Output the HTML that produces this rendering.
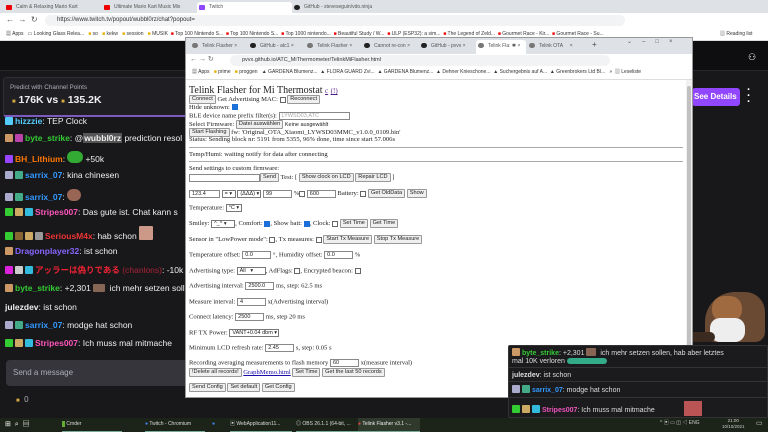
<!DOCTYPE html>
<html><head><meta charset="utf-8"><style>
*{margin:0;padding:0;box-sizing:border-box}
body{width:768px;height:432px;overflow:hidden;background:#0e0e10;font-family:"Liberation Sans","Noto Sans CJK JP",sans-serif;position:relative}
.a{position:absolute;white-space:nowrap}
.tab{position:absolute;top:2px;height:11px;font-size:5px;color:#555;line-height:11px;padding-left:12px}
.tab i{position:absolute;left:2px;top:3px;width:6px;height:5px;background:#e00;border-radius:1px}
.bm{position:absolute;font-size:5px;color:#333;line-height:13px}
.chat{position:absolute;left:5px;font-size:8.5px;color:#efeff1;white-space:nowrap}
.bd{display:inline-block;width:8px;height:8px;border-radius:1px;vertical-align:-1px;margin-right:2px}
.pg{position:absolute;left:189px;font-family:"Liberation Serif",serif;font-size:6.6px;color:#222;white-space:nowrap;line-height:8px}
.b{display:inline-block;font-family:"Liberation Sans",sans-serif;font-size:5.6px;border:1px solid #999;background:#efefef;border-radius:1px;padding:0 2px;line-height:7px;vertical-align:middle}
.in{display:inline-block;border:1px solid #888;background:#fff;height:8px;vertical-align:middle;font-family:"Liberation Sans",sans-serif;font-size:5.5px;line-height:6px;padding-left:2px}
.cb{display:inline-block;width:6px;height:6px;border:1px solid #666;vertical-align:middle;background:#fff}
.cbc{background:#1a6fd8;border-color:#1a6fd8}
.sel{display:inline-block;border:1px solid #777;background:#fff;height:8px;vertical-align:middle;font-family:"Liberation Sans",sans-serif;font-size:5.5px;line-height:6px;padding:0 2px}
</style></head><body>
<!-- outer browser -->
<div class="a" style="left:0;top:0;width:768px;height:13px;background:#dee1e6"></div>
<div class="tab" style="left:4px;width:96px">Calm &amp; Relaxing Mario Kart<i></i></div>
<div class="tab" style="left:102px;width:95px">Ultimate Mario Kart Music Mix<i></i></div>
<div class="tab" style="left:197px;width:95px;background:#fff;border-radius:3px 3px 0 0">Twitch<i style="background:#9146ff"></i></div>
<div class="tab" style="left:292px;width:95px">GitHub - steveseguin/vdo.ninja<i style="background:#222;border-radius:3px"></i></div>
<div class="a" style="left:0;top:13px;width:768px;height:15px;background:#fff"></div>
<div class="a" style="left:45px;top:15px;width:580px;height:11px;background:#f1f3f4;border-radius:6px;font-size:6px;line-height:11px;padding-left:12px;color:#333">https://www.twitch.tv/popout/wubbl0rz/chat?popout=</div>
<div class="a" style="left:6px;top:15px;font-size:8px;color:#555">←&nbsp; → &nbsp;↻</div>
<div class="a" style="left:0;top:28px;width:768px;height:13px;background:#fff;border-bottom:1px solid #ddd"></div>
<div class="bm" style="left:6px;top:28px">▦ Apps &nbsp;&nbsp;▭ Looking Glass Relea... &nbsp;&nbsp;<span style="color:#e8b000">■</span> so &nbsp;&nbsp;<span style="color:#e8b000">■</span> kekw &nbsp;&nbsp;<span style="color:#e8b000">■</span> session &nbsp;&nbsp;<span style="color:#e8b000">■</span> MUSIK &nbsp;<span style="color:#e00">■</span> Top 100 Nintendo S... &nbsp;<span style="color:#e00">■</span> Top 100 Nintendo S... &nbsp;<span style="color:#e00">■</span> Top 1000 nintendo... &nbsp;<span style="color:#e00">■</span> Beautiful Study / W... &nbsp;<span style="color:#e00">■</span> ULP (ESP32): a sim... &nbsp;<span style="color:#e00">■</span> The Legend of Zeld... &nbsp;<span style="color:#e00">■</span> Gourmet Race - Kir... &nbsp;<span style="color:#e00">■</span> Gourmet Race - Su...</div>
<div class="bm" style="left:720px;top:28px">▥ Reading list</div>
<!-- twitch -->
<div class="a" style="left:0;top:41px;width:768px;height:30px;background:#0e0e10;border-bottom:1px solid #26262c"></div>
<div class="a" style="left:0;top:71px;width:768px;height:347px;background:#18181b"></div>
<div class="a" style="left:3px;top:77px;width:190px;height:40px;background:#1f1f23;border:1px solid #2f2f35;border-bottom:2px solid #7d5bbe;border-radius:3px"></div>
<div class="a" style="left:10px;top:84px;font-size:6.3px;color:#adadb8">Predict with Channel Points</div>
<div class="a" style="left:12px;top:94px;font-size:10.5px;font-weight:bold;color:#efeff1"><span style="color:#d7a940;font-size:6px">■</span> 176K vs <span style="color:#d7a940;font-size:6px">■</span> 135.2K</div>
<div class="a" style="left:692px;top:88px;width:48px;height:18px;background:#9147ff;border-radius:3px;color:#fff;font-size:8px;font-weight:bold;line-height:18px;padding-left:2px">See Details</div>
<div class="a" style="left:747px;top:87px;font-size:11px;color:#fff;font-weight:bold;line-height:6px">·<br>·<br>·</div>
<div class="a" style="left:748px;top:52px;color:#fff;font-size:9px">⚇</div>
<div class="chat" style="top:116px"><span class="bd" style="background:#5cf"></span><span style="color:#5cf;font-weight:bold">hizzzie</span>: TEP Clock</div>
<div class="chat" style="top:133px"><span class="bd" style="background:#c96"></span><span class="bd" style="background:#b4a"></span><span style="color:#3c3;font-weight:bold">byte_strike</span>: @<span style="background:#555;padding:0 1px;font-weight:bold">wubbl0rz</span> prediction resol</div>
<div class="chat" style="top:151px"><span class="bd" style="background:#94f"></span><span style="color:#f70;font-weight:bold">BH_Lithium</span>: <span class="bd" style="background:#3a3;width:16px;height:12px;border-radius:6px"></span>+50k</div>
<div class="chat" style="top:170px"><span class="bd" style="background:#aac"></span><span class="bd" style="background:#4a8"></span><span style="color:#39f;font-weight:bold">sarrix_07</span>: kina chinesen</div>
<div class="chat" style="top:189px"><span class="bd" style="background:#aac"></span><span class="bd" style="background:#4a8"></span><span style="color:#39f;font-weight:bold">sarrix_07</span>: <span class="bd" style="background:#965;width:14px;height:12px;border-radius:6px"></span></div>
<div class="chat" style="top:207px"><span class="bd" style="background:#3c3"></span><span class="bd" style="background:#ca6"></span><span class="bd" style="background:#3bd"></span><span style="color:#f5b;font-weight:bold">Stripes007</span>: Das gute ist. Chat kann s</div>
<div class="chat" style="top:226px"><span class="bd" style="background:#3c3"></span><span class="bd" style="background:#863"></span><span class="bd" style="background:#ca6"></span><span class="bd" style="background:#999"></span><span style="color:#e33;font-weight:bold">SeriousM4x</span>: hab schon <span class="bd" style="background:#c98;width:14px;height:14px"></span></div>
<div class="chat" style="top:246px"><span class="bd" style="background:#c96"></span><span style="color:#86f;font-weight:bold">Dragonplayer32</span>: ist schon</div>
<div class="chat" style="top:264px"><span class="bd" style="background:#d2d"></span><span class="bd" style="background:#ccc"></span><span class="bd" style="background:#3bd"></span><span style="color:#e23;font-weight:bold">アッラーは偽りである</span> <span style="color:#a23">(chanlons)</span>: -10k</div>
<div class="chat" style="top:283px"><span class="bd" style="background:#c96"></span><span style="color:#3c3;font-weight:bold">byte_strike</span>: +2,301 <span class="bd" style="background:#865;width:12px"></span> ich mehr setzen soll</div>
<div class="chat" style="top:302px"><span style="font-weight:bold">julezdev</span>: ist schon</div>
<div class="chat" style="top:320px"><span class="bd" style="background:#aac"></span><span class="bd" style="background:#4a8"></span><span style="color:#39f;font-weight:bold">sarrix_07</span>: modge hat schon</div>
<div class="chat" style="top:338px"><span class="bd" style="background:#3c3"></span><span class="bd" style="background:#ca6"></span><span class="bd" style="background:#3bd"></span><span style="color:#f5b;font-weight:bold">Stripes007</span>: Ich muss mal mitmache</div>
<div class="a" style="left:6px;top:360px;width:186px;height:26px;background:#35353b;border-radius:4px;font-size:8px;color:#adadb8;line-height:26px;padding-left:7px">Send a message</div>
<div class="a" style="left:16px;top:395px;font-size:8px;color:#adadb8"><span style="color:#d7a940;font-size:6px">■</span> &nbsp;0</div>
<!-- cat -->
<div class="a" style="left:705px;top:292px;width:60px;height:50px;background:#6b4a33;border-radius:30px 20px 10px 10px"></div>
<div class="a" style="left:712px;top:296px;width:30px;height:26px;background:#a06a40;border-radius:12px"></div>
<div class="a" style="left:710px;top:318px;width:35px;height:24px;background:#eee;border-radius:10px"></div>
<div class="a" style="left:655px;top:332px;width:60px;height:10px;background:#3a2a20;border-radius:5px"></div>
<div class="a" style="left:652px;top:334px;width:12px;height:6px;background:#eee;border-radius:3px"></div>
<!-- inner browser -->
<div class="a" style="left:185px;top:37px;width:508px;height:361px;background:#fff;border:1px solid #999"></div>
<div class="a" style="left:186px;top:38px;width:506px;height:16px;background:#dee1e6"></div>
<div class="tab" style="left:190px;top:40px;width:58px;height:13px;line-height:13px">Telink Flasher ×<i style="background:#777;border-radius:3px"></i></div>
<div class="tab" style="left:248px;top:40px;width:57px;height:13px;line-height:13px">GitHub - atc1 ×<i style="background:#222;border-radius:3px"></i></div>
<div class="tab" style="left:305px;top:40px;width:57px;height:13px;line-height:13px">Telink Flasher ×<i style="background:#777;border-radius:3px"></i></div>
<div class="tab" style="left:362px;top:40px;width:57px;height:13px;line-height:13px">Cannot re-con ×<i style="background:#222;border-radius:3px"></i></div>
<div class="tab" style="left:419px;top:40px;width:57px;height:13px;line-height:13px">GitHub - pvvx ×<i style="background:#222;border-radius:3px"></i></div>
<div class="tab" style="left:476px;top:40px;width:50px;height:14px;line-height:13px;background:#fff;border-radius:3px 3px 0 0">Telink Fla: ✱ ×<i style="background:#777;border-radius:3px"></i></div>
<div class="tab" style="left:527px;top:40px;width:60px;height:13px;line-height:13px">Telink OTA &nbsp;&nbsp;&nbsp;&nbsp;×<i style="background:#777;border-radius:3px"></i></div>
<div class="a" style="left:592px;top:40px;font-size:8px;color:#444">+</div>
<div class="a" style="left:627px;top:38px;font-size:6px;color:#555;letter-spacing:10px">⌄–□×</div>
<div class="a" style="left:186px;top:54px;width:506px;height:13px;background:#fff"></div>
<div class="a" style="left:190px;top:55px;font-size:7px;color:#666">← → ↻</div>
<div class="a" style="left:230px;top:55px;width:380px;height:11px;background:#f1f3f4;border-radius:6px;font-size:5.5px;line-height:11px;padding-left:12px;color:#333">pvvx.github.io/ATC_MiThermometer/TelinkMiFlasher.html</div>
<div class="bm" style="left:192px;top:66px;line-height:13px">▦ Apps &nbsp;&nbsp;<span style="color:#e8b000">■</span> prime &nbsp;&nbsp;<span style="color:#e8b000">■</span> proggen &nbsp;&nbsp;▲ GARDENA Blumenz... &nbsp;▲ FLORA GUARD Zvi... &nbsp;▲ GARDENA Blumenz... &nbsp;▲ Dehner Knieschone... &nbsp;▲ Suchergebnis auf A... &nbsp;▲ Greenbrokers Ltd Bl... &nbsp;&nbsp;» &nbsp;▥ Leseliste</div>
<div class="a" style="left:186px;top:79px;width:506px;height:1px;background:#ddd"></div>
<div class="a" style="left:686px;top:80px;width:6px;height:318px;background:#f1f1f1"></div>
<div class="a" style="left:687px;top:86px;width:4px;height:300px;background:#c1c1c1;border-radius:2px"></div>
<!-- page content -->
<div class="pg" style="top:85px;font-size:10px;line-height:11px">Telink Flasher for Mi Thermostat <span style="font-size:7px;color:#551a8b;text-decoration:underline">c</span> <span style="font-size:7px;color:#551a8b;text-decoration:underline">(!)</span></div>
<div class="pg" style="top:95px"><span class="b">Connect</span> Get Advertising MAC: <span class="cb"></span> <span class="b">Reconnect</span></div>
<div class="pg" style="top:104px">Hide unknown: <span class="cb cbc"></span></div>
<div class="pg" style="top:112px">BLE device name prefix filter(s): <span class="in" style="width:71px;color:#aaa">LYWSD03,ATC</span></div>
<div class="pg" style="top:120px">Select Firmware: <span class="b">Datei auswählen</span> <span style="font-family:'Liberation Sans';font-size:5.5px">Keine ausgewählt</span></div>
<div class="pg" style="top:128px"><span class="b">Start Flashing</span> fw: 'Original_OTA_Xiaomi_LYWSD03MMC_v1.0.0_0109.bin'</div>
<div class="pg" style="top:136px">Status: Sending block nr: 5191 from 5355, 96% done, time since start 57.006s</div>
<div class="a" style="left:189px;top:147px;width:494px;height:1px;background:#aaa"></div>
<div class="pg" style="top:151px">Temp/Humi: waiting notify for data after connecting</div>
<div class="a" style="left:189px;top:161px;width:494px;height:1px;background:#aaa"></div>
<div class="pg" style="top:165px">Send settings to custom firmware:</div>
<div class="pg" style="top:173px"><span class="in" style="width:71px"></span><span class="b">Send</span> Test: [ <span class="b">Show clock on LCD</span> <span class="b">Repair LCD</span> ]</div>
<div class="pg" style="top:189px"><span class="in" style="width:31px">123.4</span> <span class="sel" style="width:14px">= ▾</span> <span class="sel" style="width:24px">(ΔΔΔ) ▾</span> <span class="in" style="width:29px">99</span> %<span class="cb"></span> <span class="in" style="width:29px">600</span> Battery: <span class="cb"></span> <span class="b">Get OldData</span> <span class="b">Show</span></div>
<div class="pg" style="top:204px">Temperature: <span class="sel">°C ▾</span></div>
<div class="pg" style="top:219px">Smiley: <span class="sel" style="width:24px">^_^ ▾</span>, Comfort: <span class="cb cbc"></span>, Show batt: <span class="cb cbc"></span>, Clock: <span class="cb"></span> <span class="b">Set Time</span> <span class="b">Get Time</span></div>
<div class="pg" style="top:235px">Sensor in "LowPower mode": <span class="cb"></span>, Tx measures: <span class="cb"></span> <span class="b">Start Tx Measure</span> <span class="b">Stop Tx Measure</span></div>
<div class="pg" style="top:251px">Temperature offset: <span class="in" style="width:29px">0.0</span> °, Humidity offset: <span class="in" style="width:29px">0.0</span> %</div>
<div class="pg" style="top:267px">Advertising type: <span class="sel" style="width:29px">All &nbsp;&nbsp;▾</span>, AdFlags: <span class="cb"></span>, Encrypted beacon: <span class="cb"></span></div>
<div class="pg" style="top:282px">Advertising interval: <span class="in" style="width:29px">2500.0</span> ms, step: 62.5 ms</div>
<div class="pg" style="top:298px">Measure interval: <span class="in" style="width:29px">4</span> x(Advertising interval)</div>
<div class="pg" style="top:313px">Connect latency: <span class="in" style="width:29px">2500</span> ms, step 20 ms</div>
<div class="pg" style="top:329px">RF TX Power: <span class="sel" style="width:50px">VANT+0.04 dbm ▾</span></div>
<div class="pg" style="top:344px">Minimum LCD refresh rate: <span class="in" style="width:29px">2.45</span> s, step: 0.05 s</div>
<div class="pg" style="top:359px">Recording averaging measurements to flash memory <span class="in" style="width:29px">60</span> x(measure interval)</div>
<div class="pg" style="top:368px"><span class="b">!Delete all records!</span> <span style="color:#1a0dab;text-decoration:underline">GraphMemo.html</span> <span class="b">Set Time</span> <span class="b">Get the last 50 records</span></div>
<div class="pg" style="top:383px"><span class="b">Send Config</span> <span class="b">Set default</span> <span class="b">Get Config</span></div>
<!-- overlay chat -->
<div class="a" style="left:508px;top:345px;width:260px;height:73px;background:#1b1b1e;border:1px solid #333;border-radius:2px"></div>
<div class="a" style="left:512px;top:348px;font-size:7px;color:#ddd;line-height:8px"><span class="bd" style="background:#c96"></span><span style="color:#3c3;font-weight:bold">byte_strike</span>: +2,301 <span class="bd" style="background:#865;width:10px"></span> ich mehr setzen sollen, hab aber letztes<br>mal 10K verloren <span class="bd" style="background:#3a8;width:40px;height:6px;border-radius:3px"></span></div>
<div class="a" style="left:508px;top:367px;width:260px;height:1px;background:#333"></div>
<div class="a" style="left:512px;top:372px;font-size:7px;color:#ddd"><b>julezdev</b>: ist schon</div>
<div class="a" style="left:508px;top:381px;width:260px;height:1px;background:#333"></div>
<div class="a" style="left:512px;top:385px;font-size:7px;color:#ddd"><span class="bd" style="background:#aac"></span><span class="bd" style="background:#4a8"></span><span style="color:#39f;font-weight:bold">sarrix_07</span>: modge hat schon</div>
<div class="a" style="left:508px;top:397px;width:260px;height:1px;background:#333"></div>
<div class="a" style="left:512px;top:405px;font-size:7px;color:#ddd"><span class="bd" style="background:#3c3"></span><span class="bd" style="background:#ca6"></span><span class="bd" style="background:#3bd"></span><span style="color:#e5b;font-weight:bold">Stripes007</span>: Ich muss mal mitmache</div>
<div class="a" style="left:684px;top:401px;width:18px;height:15px;background:#b55"></div>
<!-- taskbar -->
<div class="a" style="left:0;top:418px;width:768px;height:14px;background:#1c2419"></div>
<div class="a" style="left:5px;top:419px;font-size:7px;color:#fff">⊞ &nbsp;⌕ &nbsp;▤</div>
<div class="a" style="left:62px;top:418px;width:60px;height:14px;font-size:5px;color:#ddd;line-height:13px;border-bottom:1px solid #7a9"><span style="background:#6a3;color:#6a3">■</span> Cmder</div>
<div class="a" style="left:145px;top:418px;width:60px;height:14px;font-size:5px;color:#ddd;line-height:13px;border-bottom:1px solid #7a9"><span style="color:#48f">●</span> Twitch - Chromium</div>
<div class="a" style="left:212px;top:418px;font-size:5px;color:#ddd;line-height:13px"><span style="color:#48f">●</span></div>
<div class="a" style="left:230px;top:418px;width:62px;height:14px;font-size:5px;color:#ddd;line-height:13px;border-bottom:1px solid #7a9">▣ WebApplication11...</div>
<div class="a" style="left:296px;top:418px;width:62px;height:14px;font-size:5px;color:#ddd;line-height:13px;border-bottom:1px solid #7a9">◎ OBS 26.1.1 (64-bit, ...</div>
<div class="a" style="left:358px;top:418px;width:62px;height:14px;font-size:5px;color:#eee;line-height:13px;background:#2f3a2c;border-bottom:1px solid #7a9"><span style="color:#e44">●</span> Telink Flasher v3.1 -...</div>
<div class="a" style="left:660px;top:419px;font-size:5px;color:#ccc">^ ▣ ▭ ◫ ◁ ENG</div>
<div class="a" style="left:722px;top:418px;font-size:4.5px;color:#ccc;text-align:center;line-height:6px">21:00<br>10/10/2021</div>
<div class="a" style="left:756px;top:419px;font-size:7px;color:#ccc">▭</div>
</body></html>
